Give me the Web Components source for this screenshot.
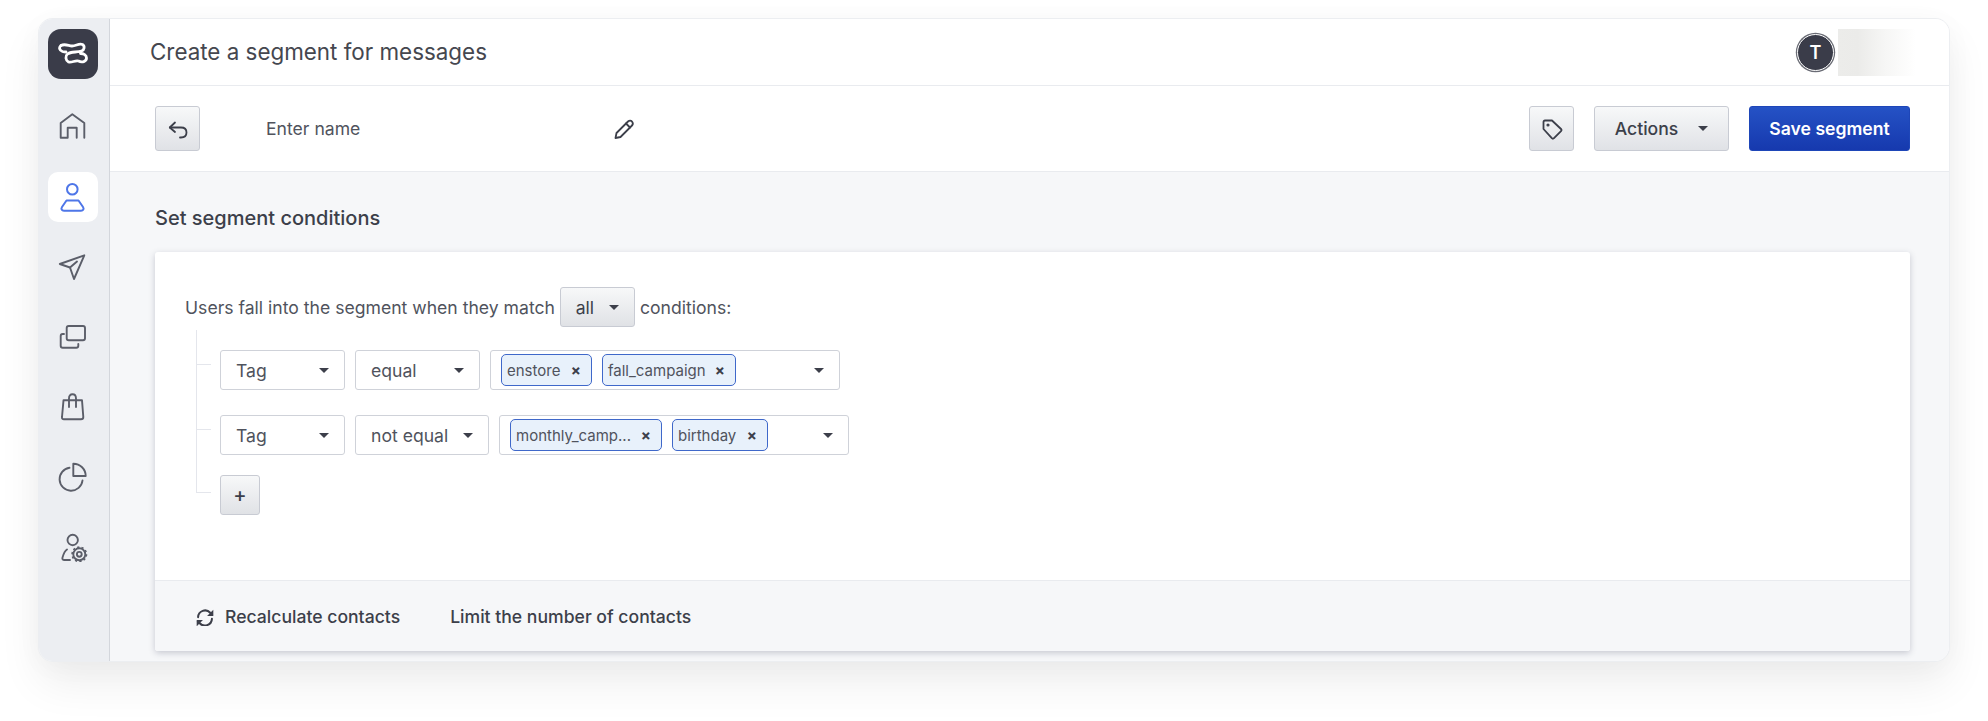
<!DOCTYPE html>
<html>
<head>
<meta charset="utf-8">
<title>Create a segment</title>
<style>
  html, body { margin: 0; height: 100%; background: #fff; }
  body { font-family: Inter, "Liberation Sans", sans-serif; color: #3c3f4a; }
</style>
</head>
<body>
<app-shell>
  <side-nav slot="nav"></side-nav>
  <top-bar slot="top" heading="Create a segment for messages"></top-bar>
  <tool-bar slot="tools"></tool-bar>
  <h2 slot="heading">Set segment conditions</h2>
  <segment-card slot="card"></segment-card>
</app-shell>

<script>
//nav icons are on a 30 box, the small ones on a 24 box
const ICONS = {
  home: '<path d="M26.300 25.700V11L14.300 2.300 2.700 11v14.700h7v-10h9v10"/>',
  user: '<circle cx="14.300" cy="7.300" r="5.300"/><path d="M8.500 18.500h12l4.500 6.500c1.300 2 .3 3.700-2 3.700H6c-2.300 0-3.300-1.700-2-3.700z"/>',
  send: '<path d="M26.300 3.300 1.800 12 12 15.500 16 27z"/><path d="M12 15.500 19 9.500"/>',
  copy: '<rect x="8.700" y="4" width="18.300" height="14.300" rx="2"/><path d="M6 12H4.700c-1.200 0-2 .8-2 2v9.700c0 1.200.8 2 2 2h13.600c1.200 0 2-.8 2-2V22"/>',
  bag: '<path d="M5.500 8.300H24l1.300 16.700c0 1.500-.8 2.300-2.300 2.300H6c-1.500 0-2.300-.8-2-2.300z"/><path d="M11 15V6.500c0-2.800 1.300-4.200 3.500-4.200S18 3.700 18 6.500V15"/>',
  pie: '<path d="M11.500 5.800A11.500 11.500 0 1 0 24.500 18.500"/><path d="M15.300 1.700A12.300 12.300 0 0 1 27.700 14H15.300z"/>',
  usergear: '<circle cx="14.700" cy="8" r="5.200"/><path d="M9 17.500c-2 1.200-3.300 3.800-4.500 8-.5 1.700.3 2.500 2 2.500H12"/><circle cx="21.300" cy="22.300" r="6"/><circle cx="21.300" cy="22.300" r="7.200" stroke-width="1.600" stroke-dasharray="2.200 2.300" stroke-linecap="butt"/><circle cx="21.300" cy="22.300" r="2.400"/>',
  back: '<path d="M9 5.500 3.800 10.500 9 15"/><path d="M3.800 10.500H15c3.600 0 5.500 2 5.500 5s-1.900 5-5.500 5h-1"/>',
  pencil: '<path d="M3.500 21 4.500 16 16 4.500c1.300-1.300 3-1.300 4 0s1.300 2.700 0 4L8.500 20z"/><path d="M14 6.500l4 4"/>',
  tag: '<path d="M3.500 5c0-1 .5-1.500 1.500-1.500h7l9 8.500c.7.700.7 1.500 0 2.200l-7 7c-.7.700-1.500.7-2.200 0L3.500 12z"/><circle cx="8" cy="8" r=".7" fill="currentColor"/>',
  sync: '<path d="M3.700 11a8.400 8.400 0 0 1 14.600-5.300L20.500 8"/><path d="M20.300 13a8.400 8.400 0 0 1-14.600 5.300L3.500 16"/><path d="M22 2v7.500h-7.500z" fill="currentColor" stroke="none"/><path d="M2 22v-7.500h7.500z" fill="currentColor" stroke="none"/>'
};

//little helper so each element gets an open root with its own styles
function mount(el, html) {
  el.attachShadow({ mode: "open" }).innerHTML = html;
}

class UiIcon extends HTMLElement {
  connectedCallback() {
    const size = this.getAttribute("size") || 24;
    const width = this.getAttribute("stroke") || 1.8;
    mount(this, `
      <style>:host{display:inline-flex;line-height:0}</style>
      <svg width="${size}" height="${size}" viewBox="0 0 ${size} ${size}" fill="none" stroke="currentColor"
        stroke-width="${width}" stroke-linecap="round" stroke-linejoin="round">${ICONS[this.getAttribute("name")]}</svg>`);
  }
}

//down arrow used in buttons and selects
class UiCaret extends HTMLElement {
  connectedCallback() {
    mount(this, `
      <style>
        :host{display:inline-block;width:0;height:0;flex:none;
          border-left:5px solid transparent;border-right:5px solid transparent;border-top:5px solid #3c3f4a}
      </style>`);
  }
}

class UiButton extends HTMLElement {
  connectedCallback() {
    mount(this, `
      <style>
        :host{display:inline-flex;align-items:center;justify-content:center;box-sizing:border-box;height:45px;
          border:1px solid #c8cbd3;border-radius:3px;background:linear-gradient(#f7f8f9,#e0e2e6);
          color:#3c3f4a;font-size:17.6px;font-weight:450;white-space:nowrap}
        :host([primary]){background:linear-gradient(#2552c5,#1639ae);border-color:#1e46b8;color:#fff;font-weight:600}
      </style>
      <slot></slot>`);
  }
}

class UiSelect extends HTMLElement {
  connectedCallback() {
    mount(this, `
      <style>
        :host{display:flex;align-items:center;justify-content:space-between;box-sizing:border-box;height:40px;
          padding:0 15px;border:1px solid #cfd2d9;border-radius:3px;background:#fff;font-size:17.6px;color:#50535d;flex:none}
      </style>
      <slot></slot><ui-caret></ui-caret>`);
  }
}

class TagChip extends HTMLElement {
  connectedCallback() {
    mount(this, `
      <style>
        :host{display:inline-flex;align-items:center;justify-content:space-between;box-sizing:border-box;height:32px;
          padding:0 10px 0 5px;border:1px solid #3f68ca;border-radius:5px;background:#e8f1fb;
          font-size:15px;color:#50535d;white-space:nowrap;flex:none}
        span{font-weight:700;color:#3c3f4a;font-size:15px;line-height:1}
      </style>
      <slot></slot><span>×</span>`);
  }
}

class TagSelect extends HTMLElement {
  connectedCallback() {
    mount(this, `
      <style>
        :host{display:flex;align-items:center;gap:10px;box-sizing:border-box;height:40px;
          padding:0 15px 0 10px;border:1px solid #cfd2d9;border-radius:3px;background:#fff;width:350px;flex:none}
        ui-caret{margin-left:auto}
      </style>
      <slot></slot><ui-caret></ui-caret>`);
  }
}

//a row of the condition tree, the branch line sits in front of the controls
class ConditionRow extends HTMLElement {
  connectedCallback() {
    mount(this, `
      <style>
        :host{display:flex;align-items:flex-start;margin-bottom:25px}
        :host([last]){margin:-5px 0 0}
        i{width:15px;height:1px;background:#e4e6ec;margin:14px 9px 0 0;flex:none}
        :host([last]) i{margin-top:17px}
        .box{display:flex;gap:10px}
      </style>
      <i></i><div class="box"><slot></slot></div>`);
  }
}

class SideNav extends HTMLElement {
  connectedCallback() {
    const items = ["home", "user", "send", "copy", "bag", "pie", "usergear"];
    mount(this, `
      <style>
        :host{display:flex;flex-direction:column;align-items:center;gap:20px;box-sizing:border-box;width:71px;height:100%;
          padding:10px 2px 0 0;background:#eceef2;border-right:1px solid #d3d6dc}
        .logo{width:50px;height:50px;border-radius:13px;background:#3a3c49;display:flex;align-items:center;justify-content:center;margin-bottom:3px}
        .item{width:50px;height:50px;border-radius:10px;display:flex;align-items:center;justify-content:center;color:#5b5e69}
        .item.on{background:#fff;color:#4e76e8}
      </style>
      <div class="logo">
        <svg width="30" height="24" viewBox="0 0 30 24" fill="none" stroke="#fff" stroke-width="2.800" stroke-linecap="round" stroke-linejoin="round">
          <path d="M3 3.500C6.500 1.500 10 3.500 14 4c4 0 7-3 10.500-1.500 2.500 1.500 2 5.500-1 6.500-4.500 1.500-11 .5-14 3-2.500 2-2 6.500 1 8 3.500 1 6.500-2 10-1 3.500 2 8 .5 8-3 0-3-3-4.500-6-4.500"/>
          <path d="M3 3.500C.5 5.500 1.500 8.500 4.500 9.500c1 .3 2.500.5 3.500.5"/>
        </svg>
      </div>
      ${items.map(n => `<div class="item ${n === "user" ? "on" : ""}"><ui-icon name="${n}" size="30" stroke="${n === "user" ? 2 : 1.9}"></ui-icon></div>`).join("")}`);
  }
}

class TopBar extends HTMLElement {
  connectedCallback() {
    mount(this, `
      <style>
        :host{display:flex;align-items:center;box-sizing:border-box;height:67px;padding:0 33px 0 40px;background:#fff;border-bottom:1px solid #e9ebef}
        h1{margin:0 0 2px;font-size:22.4px;font-weight:400;color:#45474f;flex:1}
        .avatar{width:35px;height:35px;border-radius:50%;background:#3a3c49;color:#fff;font-size:18px;font-weight:600;
          display:flex;align-items:center;justify-content:center;border:1.500px solid #fff;box-shadow:0 0 0 1.200px #6a6c75}
        .blur{width:78px;height:47px;margin-left:4px;background:linear-gradient(90deg,#ececea,#ebebe9 25%,#f6f6f5 60%,#fff 100%)}
      </style>
      <h1>${this.getAttribute("heading")}</h1>
      <div class="avatar">T</div><div class="blur"></div>`);
  }
}

class ToolBar extends HTMLElement {
  connectedCallback() {
    mount(this, `
      <style>
        :host{display:flex;align-items:center;box-sizing:border-box;height:86px;padding:0 39px 0 45px;background:#fff;border-bottom:1px solid #e9ebef}
        .name{width:346px;margin-left:66px;font-size:17.6px;color:#50535d;flex:none}
        .pen{color:#3c3f4a;display:flex}
        .spacer{flex:1}
        .sq{width:45px}
        .act{width:135px;gap:20px;margin:0 20px}
        .save{width:161px}
      </style>
      <ui-button class="sq"><ui-icon name="back" size="24"></ui-icon></ui-button>
      <div class="name">Enter name</div>
      <div class="pen"><ui-icon name="pencil" size="24"></ui-icon></div>
      <div class="spacer"></div>
      <ui-button class="sq"><ui-icon name="tag" size="24"></ui-icon></ui-button>
      <ui-button class="act">Actions <ui-caret></ui-caret></ui-button>
      <ui-button class="save" primary>Save segment</ui-button>`);
  }
}

class SegmentCard extends HTMLElement {
  connectedCallback() {
    mount(this, `
      <style>
        :host{display:block;background:#fff;border-radius:3px;box-shadow:0 2px 6px rgba(60,65,90,.25)}
        .body{box-sizing:border-box;height:328px;padding:35px 30px 0}
        .lead{display:flex;align-items:center;font-size:17.6px;color:#50535d;height:40px;gap:5px}
        .all{width:75px;height:40px;gap:15px;font-weight:400}
        .tree{margin:3px 0 0 11px;padding-top:20px;background:linear-gradient(#e4e6ec,#e4e6ec) no-repeat 0 0/1px 163px}
        .tree ui-select{width:125px}
        .tree ui-select.wide{width:134px}
        .plus{width:40px;height:40px;font-size:20px}
        .foot{display:flex;align-items:center;box-sizing:border-box;height:71px;padding:0 40px;background:#f6f7f9;
          border-top:1px solid #e9ebef;border-radius:0 0 3px 3px;font-size:17.6px;font-weight:450;color:#3c3f4a}
        .foot ui-icon{margin-right:10px}
        .foot span + span{margin-left:50px}
      </style>
      <div class="body">
        <div class="lead">Users fall into the segment when they match
          <ui-button class="all">all <ui-caret></ui-caret></ui-button> conditions:</div>
        <div class="tree">
          <condition-row>
            <ui-select>Tag</ui-select><ui-select>equal</ui-select>
            <tag-select><tag-chip style="width:91px">enstore</tag-chip><tag-chip style="width:134px">fall_campaign</tag-chip></tag-select>
          </condition-row>
          <condition-row>
            <ui-select>Tag</ui-select><ui-select class="wide">not equal</ui-select>
            <tag-select><tag-chip style="width:152px">monthly_camp...</tag-chip><tag-chip style="width:96px">birthday</tag-chip></tag-select>
          </condition-row>
          <condition-row last><ui-button class="plus">+</ui-button></condition-row>
        </div>
      </div>
      <div class="foot"><ui-icon name="sync" size="24" stroke="2.400" style="width:20px;height:20px;overflow:hidden"></ui-icon><span>Recalculate contacts</span><span>Limit the number of contacts</span></div>`);
  }
}

class AppShell extends HTMLElement {
  connectedCallback() {
    mount(this, `
      <style>
        :host{display:block;padding:19px 39px 0}
        .win{display:grid;grid-template-columns:71px 1fr;height:642px;border-radius:14px;overflow:hidden;background:#f6f7f9}
        .wrap{border-radius:14px;box-shadow:0 0 0 1px #eceef1,0 22px 44px rgba(0,0,0,.07),0 4px 30px rgba(0,0,0,.03)}
        .main{display:flex;flex-direction:column;min-width:0}
        .content{padding:0 39px 0 45px}
        ::slotted(h2){margin:0;padding:36px 0 24px;font-size:20px;line-height:20px;font-weight:450;color:#3c3f4a}
      </style>
      <div class="wrap"><div class="win">
        <slot name="nav"></slot>
        <div class="main">
          <slot name="top"></slot>
          <slot name="tools"></slot>
          <div class="content"><slot name="heading"></slot><slot name="card"></slot></div>
        </div>
      </div></div>`);
  }
}

customElements.define("ui-icon", UiIcon);
customElements.define("ui-caret", UiCaret);
customElements.define("ui-button", UiButton);
customElements.define("ui-select", UiSelect);
customElements.define("tag-chip", TagChip);
customElements.define("tag-select", TagSelect);
customElements.define("condition-row", ConditionRow);
customElements.define("side-nav", SideNav);
customElements.define("top-bar", TopBar);
customElements.define("tool-bar", ToolBar);
customElements.define("segment-card", SegmentCard);
customElements.define("app-shell", AppShell);
</script>
</body>
</html>
